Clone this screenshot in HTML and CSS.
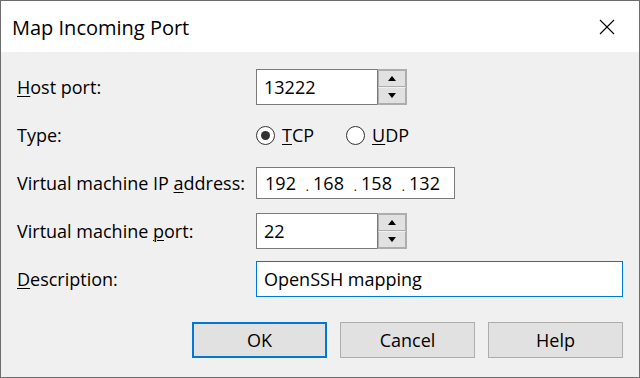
FILE: index.html
```html
<!DOCTYPE html>
<html>
<head>
<meta charset="utf-8">
<link rel="stylesheet" href="styles.css">
</head>
<body>
<div class="window">
  <div class="titlebar">
    <span class="title">Map Incoming Port</span>
    <svg class="close" width="16" height="16" viewBox="0 0 16 16"><path d="M1 1 L15 15 M15 1 L1 15" stroke="#000" stroke-width="1.1" fill="none"/></svg>
  </div>
  <div class="content">
    <div class="form">
      <div class="row">
        <span class="label"><u>H</u>ost port:</span>
        <div class="spin">
          <div class="field">13222</div>
          <div class="spinbtns">
            <div class="sbtn"><span class="tri up"></span></div>
            <div class="sbtn"><span class="tri down"></span></div>
          </div>
        </div>
      </div>
      <div class="row">
        <span class="label">Type:</span>
        <div class="radios">
          <label class="radio"><span class="circle checked"></span><span><u>T</u>CP</span></label>
          <label class="radio"><span class="circle"></span><span><u>U</u>DP</span></label>
        </div>
      </div>
      <div class="row">
        <span class="label">Virtual machine IP <u>a</u>ddress:</span>
        <div class="ip">
          <span class="oct">192</span><span class="dot">.</span><span class="oct">168</span><span class="dot">.</span><span class="oct">158</span><span class="dot">.</span><span class="oct">132</span>
        </div>
      </div>
      <div class="row">
        <span class="label">Virtual machine <u>p</u>ort:</span>
        <div class="spin">
          <div class="field">22</div>
          <div class="spinbtns">
            <div class="sbtn"><span class="tri up"></span></div>
            <div class="sbtn"><span class="tri down"></span></div>
          </div>
        </div>
      </div>
      <div class="row">
        <span class="label"><u>D</u>escription:</span>
        <div class="field wide focus">OpenSSH mapping</div>
      </div>
    </div>
    <div class="buttons">
      <button class="btn default">OK</button>
      <button class="btn">Cancel</button>
      <button class="btn">Help</button>
    </div>
  </div>
</div>
</body>
</html>
```

FILE: styles.css
```css
* { box-sizing: border-box; }
html, body { margin: 0; padding: 0; }
body {
  width: 640px;
  height: 378px;
  overflow: hidden;
  font-family: "Open Sans", "Noto Sans", sans-serif;
  font-size: 18px;
  color: #000;
}
.window {
  width: 640px;
  height: 378px;
  border: 1px solid #6d6d6d;
  background: #f0f0f0;
  display: flex;
  flex-direction: column;
}
.titlebar {
  height: 51px;
  background: #fff;
  display: flex;
  align-items: center;
  justify-content: space-between;
  padding: 0 24px 0 11px;
}
.title {
  font-size: 20px;
  position: relative;
  top: 1px;
}
.close { display: block; margin-top: 1px; }
.content {
  flex: 1;
  padding: 11px 16px 0 16px;
  display: flex;
  flex-direction: column;
}
.form { display: flex; flex-direction: column; }
.row {
  height: 48px;
  display: flex;
  align-items: center;
}
.label {
  width: 239px;
  white-space: nowrap;
}
.label u, .radio u { text-decoration-thickness: 1px; text-underline-offset: 2px; }
.spin { display: flex; height: 36px; }
.field {
  background: #fff;
  border: 1px solid #7a7a7a;
  height: 36px;
  width: 121px;
  padding-left: 7px;
  display: flex;
  align-items: center;
}
.spin .field { border-right: none; }
.field.wide { width: 367px; }
.field.focus { border-color: #0078d7; }
.spinbtns {
  display: flex;
  flex-direction: column;
  width: 30px;
  height: 36px;
  border: 1px solid #adadad;
  border-left: 1px solid #7a7a7a;
  background: #f0f0f0;
}
.sbtn {
  flex: 1;
  background: #e1e1e1;
  border: 1px solid #adadad;
  display: flex;
  align-items: center;
  justify-content: center;
  margin: 0;
}
.sbtn + .sbtn { border-top: 1px solid #f0f0f0; }
.tri { width: 0; height: 0; border-left: 4px solid transparent; border-right: 4px solid transparent; }
.tri.up { border-bottom: 5px solid #000; }
.tri.down { border-top: 5px solid #000; }
.radios { display: flex; gap: 32px; }
.radio { display: flex; align-items: center; gap: 7px; }
.circle {
  width: 19px;
  height: 19px;
  border: 1px solid #333;
  border-radius: 50%;
  background: #fff;
  display: flex;
  align-items: center;
  justify-content: center;
}
.circle.checked::after {
  content: "";
  width: 9px;
  height: 9px;
  border-radius: 50%;
  background: #333;
}
.ip {
  background: #fff;
  border: 1px solid #7a7a7a;
  height: 32px;
  width: 199px;
  padding-left: 8px;
  display: flex;
  align-items: center;
}
.oct { width: 31px; text-align: center; flex: none; }
.dot { width: 17px; padding-right: 4px; text-align: right; font-size: 12px; position: relative; top: 3px; flex: none; }
.buttons {
  margin-top: 19px;
  display: flex;
  justify-content: flex-end;
  gap: 13px;
}
.btn {
  width: 135px;
  height: 36px;
  background: #e1e1e1;
  border: 1px solid #adadad;
  font-family: inherit;
  font-size: 18px;
  color: #000;
  padding: 0;
}
.btn.default { border: 2px solid #0078d7; }
```
